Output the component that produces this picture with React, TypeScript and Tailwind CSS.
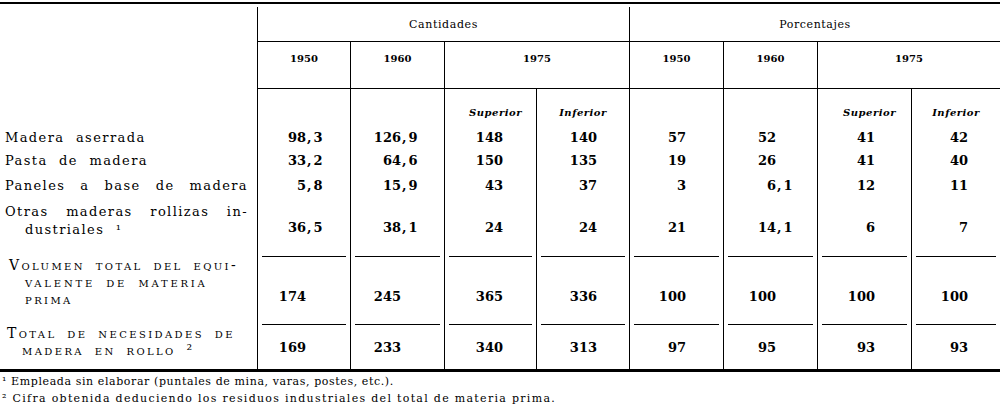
const grid = "grid grid-cols-[257px_93px_94px_92px_93px_94px_94px_94px_89px]";

// where the integer part ends inside each column (decimal alignment)
const intW = ["w-[48px]", "w-[50px]", "w-[58px]", "w-[60px]", "w-[56px]", "w-[52px]", "w-[57px]", "w-[56px]"];

type Row = {
  label: React.ReactNode;
  vals: string[];
  h: string;
  rule?: boolean;
  numPos: string;
  labelCls: string;
};

const caps = "text-[14px] leading-[17px] [font-variant:small-caps] tracking-[2.4px] [word-spacing:4px]";

const rows: Row[] = [
  {
    label: <div>Madera aserrada</div>,
    vals: ["98,3", "126,9", "148", "140", "57", "52", "41", "42"],
    h: "h-[23px]",
    numPos: "items-center",
    labelCls: "flex items-center",
  },
  {
    label: <div>Pasta de madera</div>,
    vals: ["33,2", "64,6", "150", "135", "19", "26", "41", "40"],
    h: "h-[24px]",
    numPos: "items-center",
    labelCls: "flex items-center",
  },
  {
    label: <div className="w-[243px] [text-align-last:justify]">Paneles a base de madera</div>,
    vals: ["5,8", "15,9", "43", "37", "3", "6,1", "12", "11"],
    h: "h-[25px]",
    numPos: "items-center",
    labelCls: "flex items-center",
  },
  {
    label: (
      <div className="leading-[18px]">
        <div className="w-[243px] [text-align-last:justify]">Otras maderas rollizas in-</div>
        <div className="pl-[20px]">dustriales ¹</div>
      </div>
    ),
    vals: ["36,5", "38,1", "24", "24", "21", "14,1", "6", "7"],
    h: "h-[59px]",
    rule: true,
    numPos: "items-end pb-[20px]",
    labelCls: "pt-[5px]",
  },
  {
    label: (
      <div className={caps}>
        <div className="pl-[4px]">Volumen total del equi-</div>
        <div className="pl-[20px] tracking-[2.8px]">valente de materia</div>
        <div className="pl-[20px]">prima</div>
      </div>
    ),
    vals: ["174", "245", "365", "336", "100", "100", "100", "100"],
    h: "h-[68px]",
    rule: true,
    numPos: "items-end pb-[19px]",
    labelCls: "pt-[0px]",
  },
  {
    label: (
      <div className={caps}>
        <div className="pl-[2px]">Total de necesidades de</div>
        <div className="pl-[17px]">madera en rollo ²</div>
      </div>
    ),
    vals: ["169", "233", "340", "313", "97", "95", "93", "93"],
    h: "h-[44px]",
    numPos: "items-end pb-[13px]",
    labelCls: "pt-[0px]",
  },
];

function Num({ v, i }: { v: string; i: number }) {
  const [a, b] = v.split(",");
  return (
    <div className="flex font-bold text-[13px] leading-[16px]">
      <span className={intW[i] + " text-right"}>{a}</span>
      {b !== undefined && <span className="tracking-[2px] pl-[1px]">,{b}</span>}
    </div>
  );
}

export default function App() {
  return (
    <div className="w-[1000px] h-[411px] bg-white text-black [font-family:'DejaVu_Serif',serif] overflow-hidden">
      <div className="h-[2px] mt-[2px] bg-black" />

      {/* header: group titles */}
      <div className={grid + " h-[38px] pt-[3px]"}>
        <div />
        <div className="col-span-4 border-l border-b border-black text-center text-[11px] leading-[14px] pt-[11px] tracking-[0.6px]">
          Cantidades
        </div>
        <div className="col-span-4 border-l border-b border-black text-center text-[11px] leading-[14px] pt-[11px] tracking-[0.6px]">
          Porcentajes
        </div>
      </div>

      {/* header: years */}
      <div className={grid + " h-[47px] text-[10px] leading-[13px] font-bold"}>
        <div />
        <div className="border-l border-b border-black text-center pt-[10px]">1950</div>
        <div className="border-l border-b border-black text-center pt-[10px]">1960</div>
        <div className="col-span-2 border-l border-b border-black text-center pt-[10px]">1975</div>
        <div className="border-l border-b border-black text-center pt-[10px]">1950</div>
        <div className="border-l border-b border-black text-center pt-[10px]">1960</div>
        <div className="col-span-2 border-l border-b border-black text-center pt-[10px]">1975</div>
      </div>

      {/* header: Superior / Inferior */}
      <div className={grid + " h-[37px] text-[10px] leading-[14px] italic font-bold tracking-[0.5px]"}>
        <div />
        <div className="border-l border-black" />
        <div className="border-l border-black" />
        <div className="border-l border-black text-center pt-[17px] pl-[10px]">Superior</div>
        <div className="border-l border-black text-center pt-[17px]">Inferior</div>
        <div className="border-l border-black" />
        <div className="border-l border-black" />
        <div className="border-l border-black text-center pt-[17px] pl-[10px]">Superior</div>
        <div className="border-l border-black text-center pt-[17px]">Inferior</div>
      </div>

      {/* body */}
      {rows.map((r, ri) => (
        <div key={ri} className={grid + " " + r.h}>
          <div className={"pl-[5px] text-[13px] leading-[16px] tracking-[1.4px] [word-spacing:6px] " + r.labelCls}>
            {r.label}
          </div>
          {r.vals.map((v, i) => (
            <div key={i} className="border-l border-black flex flex-col">
              <div className={"flex-1 flex " + r.numPos}>
                <Num v={v} i={i} />
              </div>
              {r.rule && <div className="h-px bg-black mx-[4px]" />}
            </div>
          ))}
        </div>
      ))}

      <div className="h-[3px] bg-black" />

      {/* footnotes */}
      <div className="pt-[1px] pl-[2px] text-[11px] leading-[17px]">
        <div className="tracking-[0.6px]">¹ Empleada sin elaborar (puntales de mina, varas, postes, etc.).</div>
        <div className="tracking-[1.3px]">² Cifra obtenida deduciendo los residuos industriales del total de materia prima.</div>
      </div>
    </div>
  );
}
